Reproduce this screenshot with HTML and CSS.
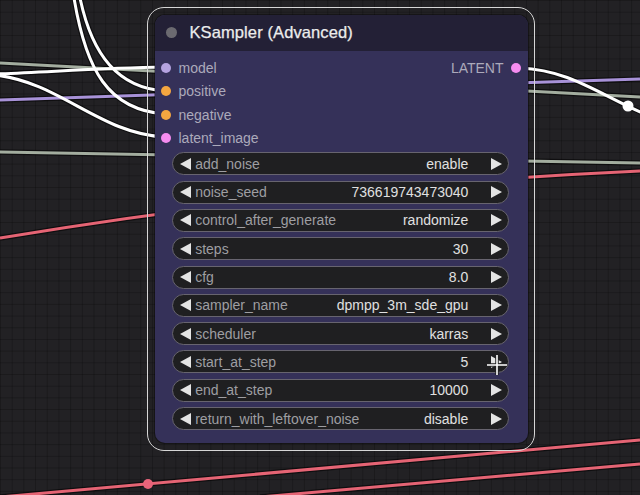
FILE: index.html
```html
<!DOCTYPE html>
<html>
<head>
<meta charset="utf-8">
<link rel="stylesheet" href="styles.css">
</head>
<body>
<div class="canvas">
  <svg class="wires" width="640" height="495" viewBox="0 0 640 495">
    <g class="shadow">
      <path d="M0,63 L640,97"/>
      <path d="M0,100 L640,79"/>
      <path d="M0,152 L640,163"/>
      <path d="M0,238 C200,205 400,182 640,171"/>
      <path d="M0,497 L640,440"/>
      <path d="M260,497 L640,464"/>
      <path d="M-5,74 C50,72 100,68 165,67"/>
      <path d="M80,-2 C92,55 118,88 165,91"/>
      <path d="M74,-2 C86,70 108,110 165,114"/>
      <path d="M-5,75 C60,82 100,134 165,137"/>
      <path d="M520,68 C570,70 600,95 645,114"/>
    </g>
    <path class="w-green" d="M0,63 L640,97"/>
    <path class="w-purple" d="M0,100 L640,79"/>
    <path class="w-green" d="M0,152 L640,163"/>
    <path class="w-red" d="M0,238 C200,205 400,182 640,171"/>
    <path class="w-red" d="M0,497 L640,440"/>
    <path class="w-red" d="M260,497 L640,464"/>
    <circle class="dot-red" cx="148" cy="484" r="5"/>
    <path class="w-white" d="M-5,74 C50,72 100,68 165,67"/>
    <path class="w-white" d="M80,-2 C92,55 118,88 165,91"/>
    <path class="w-white" d="M74,-2 C86,70 108,110 165,114"/>
    <path class="w-white" d="M-5,75 C60,82 100,134 165,137"/>
    <path class="w-white" d="M520,68 C570,70 600,95 645,114"/>
    <circle class="dot-white" cx="628" cy="106" r="5.5"/>
  </svg>

  <div class="node-sel">
    <div class="node">
      <div class="title">
        <span class="title-dot"></span>
        <span class="title-text">KSampler (Advanced)</span>
      </div>
      <div class="body">
        <div class="slots">
          <div class="inputs">
            <div class="slot"><span class="sdot c-model"></span>model</div>
            <div class="slot"><span class="sdot c-cond"></span>positive</div>
            <div class="slot"><span class="sdot c-cond"></span>negative</div>
            <div class="slot"><span class="sdot c-latent"></span>latent_image</div>
          </div>
          <div class="outputs">
            <div class="slot out">LATENT<span class="sdot c-latent"></span></div>
          </div>
        </div>
        <div class="widgets">
          <div class="widget"><span class="arr-l"></span><span class="label">add_noise</span><span class="value">enable</span><span class="arr-r"></span></div>
          <div class="widget"><span class="arr-l"></span><span class="label">noise_seed</span><span class="value">736619743473040</span><span class="arr-r"></span></div>
          <div class="widget"><span class="arr-l"></span><span class="label">control_after_generate</span><span class="value">randomize</span><span class="arr-r"></span></div>
          <div class="widget"><span class="arr-l"></span><span class="label">steps</span><span class="value">30</span><span class="arr-r"></span></div>
          <div class="widget"><span class="arr-l"></span><span class="label">cfg</span><span class="value">8.0</span><span class="arr-r"></span></div>
          <div class="widget"><span class="arr-l"></span><span class="label">sampler_name</span><span class="value">dpmpp_3m_sde_gpu</span><span class="arr-r"></span></div>
          <div class="widget"><span class="arr-l"></span><span class="label">scheduler</span><span class="value">karras</span><span class="arr-r"></span></div>
          <div class="widget"><span class="arr-l"></span><span class="label">start_at_step</span><span class="value">5</span><span class="arr-r"></span></div>
          <div class="widget"><span class="arr-l"></span><span class="label">end_at_step</span><span class="value">10000</span><span class="arr-r"></span></div>
          <div class="widget"><span class="arr-l"></span><span class="label">return_with_leftover_noise</span><span class="value">disable</span><span class="arr-r"></span></div>
        </div>
      </div>
    </div>
  </div>

  <svg class="cursor" width="24" height="24" viewBox="0 0 24 24">
    <path d="M12,2 V22 M2,12 H22" stroke="#222" stroke-width="3.5"/>
    <path d="M12,2 V22 M2,12 H22" stroke="#fff" stroke-width="1.6"/>
  </svg>
</div>
</body>
</html>
```
FILE: styles.css
```css
* { box-sizing: border-box; }
html, body { margin: 0; padding: 0; background: #212023; }
body { font-family: "Liberation Sans", Arial, sans-serif; }

.canvas {
  position: relative;
  width: 640px;
  height: 495px;
  overflow: hidden;
  background-color: #222124;
  background-image:
    linear-gradient(to right, rgba(0,0,0,0.22) 1px, transparent 1px),
    linear-gradient(to bottom, rgba(0,0,0,0.22) 1px, transparent 1px);
  background-size: 11.7px 11.7px;
}

.wires { position: absolute; left: 0; top: 0; }
.wires path { fill: none; }
.shadow path { stroke: rgba(0,0,0,0.55); stroke-width: 5.5; }
.w-green { stroke: #a3ad9f; stroke-width: 3; }
.w-purple { stroke: #a892d8; stroke-width: 3; }
.w-red { stroke: #e56474; stroke-width: 3; }
.w-white { stroke: #ffffff; stroke-width: 3; }
.dot-red { fill: #e8647a; }
.dot-white { fill: #ffffff; }

.node-sel {
  position: absolute;
  left: 147px;
  top: 7px;
  padding: 6.5px;
  border: 1.5px solid #d6d6d6;
  border-radius: 17px;
}

.node {
  width: 373px;
  border-radius: 10px;
  overflow: hidden;
  background: #353159;
  box-shadow: 0 0 0 1px rgba(0,0,0,0.35);
}

.title {
  height: 36px;
  background: #232036;
  display: flex;
  align-items: center;
  padding-left: 11.5px;
}
.title-dot {
  width: 11px;
  height: 11px;
  border-radius: 50%;
  background: #6b6a70;
  margin-right: 12.5px;
}
.title-text {
  color: #ececec;
  font-size: 16.5px;
  letter-spacing: 0.1px;
  -webkit-text-stroke: 0.25px #ececec;
}

.body { padding: 6px 0 13px; }

.slots {
  display: flex;
  justify-content: space-between;
}
.slot {
  height: 23.3px;
  display: flex;
  align-items: center;
  font-size: 14px;
  color: #acaabb;
  padding-left: 6.7px;
}
.slot .sdot {
  width: 10px;
  height: 10px;
  border-radius: 50%;
  margin-right: 7.3px;
}
.slot.out { padding-left: 0; padding-right: 6.7px; }
.slot.out .sdot { margin-right: 0; margin-left: 7.3px; }
.c-model { background: #b5a3e0; }
.c-cond { background: #f4a640; }
.c-latent { background: #f58cf0; }

.widgets {
  display: flex;
  flex-direction: column;
  gap: 5.3px;
  padding: 2.7px 18.7px 0 17.7px;
}
.widget {
  height: 23px;
  border-radius: 12px;
  background: #1f1f21;
  border: 1px solid #67646f;
  display: flex;
  align-items: center;
  padding: 0 6px 0 6.5px;
  font-size: 14px;
}
.arr-l {
  width: 0; height: 0;
  border-top: 6px solid transparent;
  border-bottom: 6px solid transparent;
  border-right: 11.5px solid #e4e4e4;
  margin-right: 4.5px;
}
.arr-r {
  width: 0; height: 0;
  border-top: 6px solid transparent;
  border-bottom: 6px solid transparent;
  border-left: 11.5px solid #e4e4e4;
  margin-left: 22.5px;
}
.label { flex: 1; color: #9e9ea2; }
.value { color: #e0e0e0; }

.cursor {
  position: absolute;
  left: 485px;
  top: 353px;
}
```
